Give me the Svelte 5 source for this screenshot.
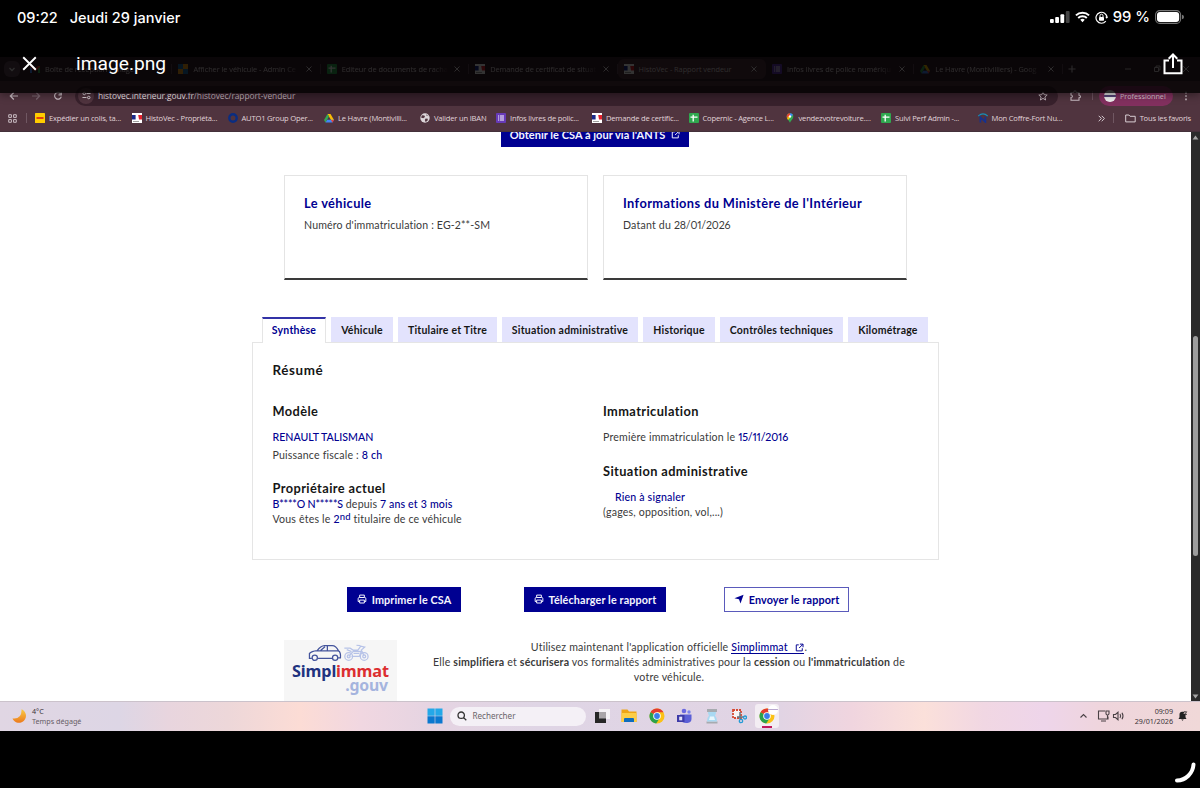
<script lang="ts">
  type Icon =
    | 'mail' | 'admin' | 'sheet' | 'flag' | 'forms' | 'drive'
    | 'dhl' | 'ring' | 'globe' | 'maps' | 'coffre';

  interface Tab {
    icon: Icon;
    title: string;
    active?: boolean;
  }

  interface Bookmark {
    icon: Icon;
    label: string;
    width: number;
  }

  const tabs: Tab[] = [
    { icon: 'mail', title: 'Boîte de réception - image' },
    { icon: 'admin', title: 'Afficher le véhicule - Admin Ce' },
    { icon: 'sheet', title: 'Editeur de documents de racha' },
    { icon: 'flag', title: 'Demande de certificat de situat' },
    { icon: 'flag', title: 'HistoVec - Rapport vendeur', active: true },
    { icon: 'forms', title: 'Infos livres de police numériqu' },
    { icon: 'drive', title: 'Le Havre (Montivilliers) - Goog' },
  ];

  const bookmarks: Bookmark[] = [
    { icon: 'dhl', label: 'Expédier un colis, ta...', width: 96.5 },
    { icon: 'flag', label: 'HistoVec - Propriéta...', width: 96 },
    { icon: 'ring', label: 'AUTO1 Group Oper...', width: 96.5 },
    { icon: 'drive', label: 'Le Havre (Montivilli...', width: 96 },
    { icon: 'globe', label: 'Valider un IBAN', width: 76 },
    { icon: 'forms', label: 'Infos livres de polic...', width: 96 },
    { icon: 'flag', label: 'Demande de certific...', width: 96.5 },
    { icon: 'sheet', label: 'Copernic - Agence L...', width: 96 },
    { icon: 'maps', label: 'vendezvotrevoiture....', width: 96.5 },
    { icon: 'sheet', label: 'Suivi Perf Admin -...', width: 96.5 },
    { icon: 'coffre', label: 'Mon Coffre-Fort Nu...', width: 100 },
  ];

  const sections = [
    { label: 'Synthèse', width: 64 },
    { label: 'Véhicule', width: 62 },
    { label: 'Titulaire et Titre', width: 99 },
    { label: 'Situation administrative', width: 136 },
    { label: 'Historique', width: 72 },
    { label: 'Contrôles techniques', width: 123 },
    { label: 'Kilométrage', width: 80 },
  ];

  let current = $state('Synthèse');
</script>

{#snippet favicon(kind: Icon)}
  <svg class="favicon" viewBox="0 0 10 10" aria-hidden="true">
    {#if kind === 'mail'}
      <path d="M0 2h2l3 2.5L8 2h2v7H8V5L5 7 2 5v4H0z" fill="#d93025" />
      <path d="M0 3l2 1.5V9H0z" fill="#4285f4" />
      <path d="M10 3L8 4.5V9h2z" fill="#34a853" />
    {:else if kind === 'admin'}
      <path d="M0 0h5v5H0zM5 5h5v5H5z" fill="#1f6fa8" />
      <path d="M5 0h5v5H5zM0 5h5v5H0z" fill="#f09a1c" />
    {:else if kind === 'sheet'}
      <rect width="10" height="10" rx="1" fill="#2fa84f" />
      <path d="M4.2 1.8v6.6M1.5 4.2h7" stroke="#fff" stroke-width="1.3" />
    {:else if kind === 'flag'}
      <rect width="10" height="10" fill="#fff" />
      <path d="M0 2h3.6v4.5H0z" fill="#1b2a8a" />
      <path d="M6.2 2H10v4.5H7z" fill="#e2232e" />
      <path d="M1 8.5h6" stroke="#888" stroke-width=".8" />
    {:else if kind === 'forms'}
      <rect width="10" height="10" rx="1" fill="#673ab7" />
      <path d="M3.8 3h4.2M3.8 5h4.2M3.8 7h4.2M2 3h1M2 5h1M2 7h1" stroke="#fff" stroke-width="1.1" />
    {:else if kind === 'drive'}
      <path d="M3.5 1h3L10 7H7z" fill="#fbbc04" />
      <path d="M3.5 1L0 7l1.5 2.4L5 3.6z" fill="#34a853" />
      <path d="M3.2 6.8H10L8.5 9.4h-7z" fill="#4285f4" />
      <path d="M7 7h3L8.5 9.4z" fill="#ea4335" />
    {:else if kind === 'dhl'}
      <rect width="10" height="10" rx=".6" fill="#fc0" />
      <path d="M1.5 5h7" stroke="#d40511" stroke-width="1.4" />
    {:else if kind === 'ring'}
      <circle cx="5" cy="5" r="3.7" fill="none" stroke="#0a2d82" stroke-width="2.4" />
    {:else if kind === 'globe'}
      <circle cx="5" cy="5" r="4.7" fill="#dcd5d9" />
      <path d="M2 2.2l2.4.3.6 1.6-1.8 1.1L1 4.6M5.6 5.4l2.3.3-.4 2-1.9 1.2-.8-1.8zM6 1.2l.4 1.4 2 .6" fill="#50343f" />
    {:else if kind === 'maps'}
      <path d="M5 10C4.6 7.6 1.7 6.5 1.7 3.5A3.3 3.3 0 0 1 8.3 3.5C8.3 6.5 5.4 7.6 5 10z" fill="#34a853" />
      <path d="M1.9 4.8A3.3 3.3 0 0 1 5 .2v3.2z" fill="#ea4335" />
      <path d="M5 .2a3.3 3.3 0 0 1 3 1.8L5 4z" fill="#4285f4" />
      <path d="M2 5l2-2 1 2-2 2z" fill="#fbbc04" />
      <circle cx="5" cy="3.5" r="1.2" fill="#fff" />
    {:else}
      <path d="M.3 3Q5-1.3 9.7 3" fill="none" stroke="#1690b8" stroke-width="1.2" />
      <path d="M2.4 9.5V4.2l5 4.8V3.8" fill="none" stroke="#15318f" stroke-width="1.7" />
    {/if}
  </svg>
{/snippet}

{#snippet external()}
  <svg class="external" viewBox="0 0 12 12" aria-hidden="true">
    <path d="M5 2.5H1.7v8h8V7M6.5 1.5h4.2v4.2M10.5 1.7L5.5 6.7" fill="none" stroke="currentColor" stroke-width="1.3" />
  </svg>
{/snippet}

{#snippet printer()}
  <svg class="btn-icon" viewBox="0 0 12 12" aria-hidden="true">
    <path d="M3.2 4V1.3h5.6V4M3.2 9H1.4V5.5q0-1.3 1.3-1.3h6.6q1.3 0 1.3 1.3V9H8.8M3.2 7.3h5.6v3.5H3.2z" fill="none" stroke="currentColor" stroke-width="1.2" />
  </svg>
{/snippet}

{#snippet chrome()}
  <svg class="app" viewBox="0 0 16 16" aria-hidden="true">
    <circle cx="8" cy="8" r="7.5" fill="#fbc116" />
    <path d="M8 8L1.5 4.2A7.5 7.5 0 0 1 14.5 4.3H8z" fill="#e33b2e" />
    <path d="M8 8L1.5 4.2A7.5 7.5 0 0 0 7.2 15.5L11 9.7z" fill="#2ba24c" />
    <circle cx="8" cy="8" r="3.8" fill="#fff" />
    <circle cx="8" cy="8" r="2.9" fill="#3b7de9" />
  </svg>
{/snippet}

<div class="screen">
  <header class="viewer">
    <div class="status">
      <span>09:22</span>
      <span class="date">Jeudi 29 janvier</span>
      <svg class="signal" viewBox="0 0 20 12" aria-hidden="true">
        <rect x="0" y="8" width="3.8" height="4" rx="1" fill="#fff" />
        <rect x="5.2" y="6" width="3.8" height="6" rx="1" fill="#fff" />
        <rect x="10.4" y="3.2" width="3.8" height="8.8" rx="1" fill="#fff" />
        <rect x="15.8" y="0" width="3.8" height="12" rx="1" fill="#444" />
      </svg>
      <svg class="wifi" viewBox="0 0 16 12" aria-hidden="true">
        <path d="M1 4.3a10 10 0 0 1 14 0M3.4 7a6.6 6.6 0 0 1 9.2 0" fill="none" stroke="#fff" stroke-width="2.1" />
        <path d="M8 11.5L5.6 9a3.4 3.4 0 0 1 4.8 0z" fill="#fff" />
      </svg>
      <svg class="lock" viewBox="0 0 13 13" aria-hidden="true">
        <path d="M10.8 10.2A5.5 5.5 0 1 1 12 6.5" fill="none" stroke="#fff" stroke-width="1.2" />
        <path d="M10.2 5.8h3l-1.5 2z" fill="#fff" />
        <rect x="4" y="5.9" width="5" height="3.8" rx=".7" fill="#fff" />
        <path d="M5 6V4.7a1.5 1.5 0 0 1 3 0V6" fill="none" stroke="#fff" stroke-width="1" />
      </svg>
      <span class="percent">99 %</span>
      <svg class="battery" viewBox="0 0 29 14" aria-hidden="true">
        <rect x=".6" y=".6" width="25" height="12.8" rx="4.2" fill="none" stroke="#777" stroke-width="1.1" />
        <rect x="2" y="2" width="22.2" height="10" rx="3" fill="#fff" />
        <path d="M27 4.7q2 .5 2 2.3t-2 2.3z" fill="#777" />
      </svg>
    </div>
    <div class="titlebar">
      <svg class="close" viewBox="0 0 16 16" aria-hidden="true">
        <path d="M1.3 1.3l13.4 13.4M14.7 1.3L1.3 14.7" stroke="#fff" stroke-width="2" />
      </svg>
      <h1>image.png</h1>
      <svg class="share" viewBox="0 0 20 22" aria-hidden="true">
        <path d="M6 7.5H1.5v12.7h17V7.5H14M10 15V1.8M5.7 5.8L10 1.5l4.3 4.3" fill="none" stroke="#fff" stroke-width="2" />
      </svg>
    </div>
  </header>

  <div class="browser">
    <div class="tabstrip">
      <svg class="tab-search" viewBox="0 0 16 16" aria-hidden="true">
        <rect width="16" height="16" rx="6" fill="#5d4350" />
        <path d="M5.5 7L8 9.5 10.5 7" fill="none" stroke="#ddd" stroke-width="1.3" />
      </svg>
      {#each tabs as tab}
        <div class="tab" class:tab--active={tab.active}>
          {@render favicon(tab.icon)}
          <span class="tab-title">{tab.title}</span>
          <svg class="tab-close" viewBox="0 0 6 6" aria-hidden="true">
            <path d="M.5.5l5 5M5.5.5l-5 5" stroke="#e0d6db" stroke-width="1" />
          </svg>
        </div>
      {/each}
      <svg class="new-tab" viewBox="0 0 8 8" aria-hidden="true"><path d="M4 .5v7M.5 4h7" stroke="#d8ced3" stroke-width="1.1" /></svg>
      <svg class="window-buttons" viewBox="0 0 66 8" aria-hidden="true">
        <path d="M1 4h6M30.5 2.5h4v4h-4zM32 2.5V1h4v4h-1.5M59 1l6 6M65 1l-6 6" fill="none" stroke="#d8ced3" stroke-width=".9" />
      </svg>
    </div>

    <div class="toolbar">
      <svg class="nav" viewBox="0 0 54 10" aria-hidden="true">
        <path d="M9 5H1.5M4.8 1.5L1.3 5l3.5 3.5" fill="none" stroke="#c9bcc3" stroke-width="1.2" />
        <path d="M23 5h7.5M27.2 1.5L30.7 5l-3.5 3.5" fill="none" stroke="#7d6872" stroke-width="1.2" />
        <path d="M51.5 2.5A3.4 3.4 0 1 0 52.3 5.6M52.3 1v2.8h-2.8" fill="none" stroke="#c9bcc3" stroke-width="1.2" />
      </svg>
      <div class="omnibox">
        <span class="site-info">
          <svg viewBox="0 0 10 10" aria-hidden="true">
            <path d="M5 2.8h4.5M.5 7.2H5" stroke="#d8ced3" stroke-width="1.2" />
            <circle cx="2.5" cy="2.8" r="1.4" fill="none" stroke="#d8ced3" stroke-width="1.1" />
            <circle cx="7.5" cy="7.2" r="1.4" fill="none" stroke="#d8ced3" stroke-width="1.1" />
          </svg>
        </span>
        <span class="url">histovec.interieur.gouv.fr<i>/histovec/rapport-vendeur</i></span>
        <svg class="star" viewBox="0 0 10 10" aria-hidden="true">
          <path d="M5 .9l1.2 2.8 3 .3-2.3 2 .7 3L5 7.4 2.4 9l.7-3L.8 4l3-.3z" fill="none" stroke="#c9bcc3" stroke-width=".9" />
        </svg>
      </div>
      <svg class="puzzle" viewBox="0 0 11 11" aria-hidden="true">
        <path d="M1 2.5h2.7Q4 .8 5 .8t1.3 1.7H9v2.7q1.5.2 1.5 1.3T9 7.8v2.4H1V7.5q1.5-.2 1.5-1.2T1 5z" fill="none" stroke="#c9bcc3" stroke-width="1.1" />
      </svg>
      <span class="toolbar-sep"></span>
      <div class="profile">
        <span class="avatar"></span>
        <span>Professionnel</span>
      </div>
      <svg class="kebab" viewBox="0 0 4 10" aria-hidden="true">
        <path d="M1.2.8h1.6v1.6H1.2zM1.2 4.2h1.6v1.6H1.2zM1.2 7.6h1.6v1.6H1.2z" fill="#c9bcc3" />
      </svg>
    </div>

    <nav class="bookmarks">
      <svg class="grid-icon" viewBox="0 0 10 10" aria-hidden="true">
        <path d="M.8.8h3v3h-3zM6.2.8h3v3h-3zM.8 6.2h3v3h-3zM6.2 6.2h3v3h-3z" fill="none" stroke="#c9bcc3" stroke-width="1.1" />
      </svg>
      <span class="bookmark-sep"></span>
      {#each bookmarks as item}
        <span class="bookmark" style:width="{item.width}px">
          {@render favicon(item.icon)}
          {item.label}
        </span>
      {/each}
      <svg class="more" viewBox="0 0 7 7" aria-hidden="true">
        <path d="M.7.8l2.7 2.7L.7 6.2M3.7.8l2.7 2.7-2.7 2.7" fill="none" stroke="#d8ced3" stroke-width="1" />
      </svg>
      <span class="bookmark-sep bookmark-sep--end"></span>
      <svg class="folder" viewBox="0 0 11 9" aria-hidden="true">
        <path d="M.7 7.9V1h3.2l1.2 1.3h5.1v5.6z" fill="none" stroke="#d8ced3" stroke-width="1" />
      </svg>
      <span class="all">Tous les favoris</span>
    </nav>

    <div class="viewport">
      <main class="page">
        <div class="csa">
          <a class="btn btn--top" href="#csa">Obtenir le CSA à jour via l'ANTS {@render external()}</a>
        </div>

        <div class="cards">
          <article class="card">
            <h2>Le véhicule</h2>
            <p class="plate">Numéro d'immatriculation : EG-2**-SM</p>
          </article>
          <article class="card">
            <h2>Informations du Ministère de l'Intérieur</h2>
            <p>Datant du <span class="day">28/01/2026</span></p>
          </article>
        </div>

        <div class="tabs" role="tablist">
          {#each sections as section}
            <button
              class="section-tab"
              class:section-tab--current={current === section.label}
              role="tab"
              aria-selected={current === section.label}
              style:width="{section.width}px"
              onclick={() => (current = section.label)}
            >{section.label}</button>
          {/each}
        </div>

        <section class="panel">
          <h3>Résumé</h3>
          <div class="columns">
            <div>
              <h4>Modèle</h4>
              <p class="model"><b class="brand">RENAULT TALISMAN</b></p>
              <p class="power">Puissance fiscale : <b>8 ch</b></p>
              <h4 class="owner">Propriétaire actuel</h4>
              <p><b class="masked">B****O N*****S</b> depuis <b>7 ans et 3 mois</b></p>
              <p>Vous êtes le <b>2<sup>nd</sup></b> titulaire de ce véhicule</p>
            </div>
            <div>
              <h4>Immatriculation</h4>
              <p class="model">Première immatriculation le <b class="day">15/11/2016</b></p>
              <h4 class="admin">Situation administrative</h4>
              <p class="nothing"><b>Rien à signaler</b></p>
              <p>(gages, opposition, vol,...)</p>
            </div>
          </div>
        </section>

        <div class="actions">
          <button class="btn btn--print">{@render printer()}Imprimer le CSA</button>
          <button class="btn btn--download">{@render printer()}Télécharger le rapport</button>
          <button class="btn btn--outline">
            <svg class="btn-icon" viewBox="0 0 12 12" aria-hidden="true">
              <path d="M11.5.8L7.8 11.5 6 6.3.5 5z" fill="currentColor" />
            </svg>Envoyer le rapport
          </button>
        </div>

        <div class="promo">
          <div class="logo">
            <svg viewBox="0 0 64 18" aria-hidden="true">
              <g fill="none" stroke="#44549c" stroke-width="1.3">
                <path d="M4 14.5H1.5V9.5q2-2.5 8-3Q13 1.5 17 1.3h8q4 0 6.5 5.5 2.5 1.5 2 7.2H31M10 14.5h15M9 6.8h22M20 1.5v5.3M13 6.5l4.5-4" />
                <circle cx="7" cy="14" r="2.7" />
                <circle cx="28" cy="14" r="2.7" />
              </g>
              <g fill="none" stroke="#b7c3e8" stroke-width="1.3">
                <circle cx="42" cy="12.5" r="4" />
                <circle cx="42" cy="12.5" r="1.5" />
                <circle cx="58" cy="12.5" r="4" />
                <circle cx="58" cy="12.5" r="1.5" />
                <path d="M37.5 4h6l3 2h5l3-4 4 1-3.5 3 3 6M45 12.5h8l2-5-8-.5-5 5.5M50 1l4 .5M47 9.5h6M40 5.5l5 2" />
              </g>
            </svg>
            <div class="wordmark">Simpl<em>immat</em></div>
            <div class="gouv">.gouv</div>
          </div>
          <p>
            Utilisez maintenant l'application officielle <a href="#simplimmat">Simplimmat &nbsp;{@render external()}</a>.<br />
            Elle <strong>simplifiera</strong> et <strong>sécurisera</strong> vos formalités administratives pour la
            <strong>cession</strong> ou <strong>l'immatriculation</strong> de<br />
            votre véhicule.
          </p>
        </div>
      </main>
      <div class="scrollbar">
        <svg viewBox="0 0 8 6" aria-hidden="true"><path d="M4 .5L7.5 5.5h-7z" fill="#a5a5a5" /></svg>
        <span class="thumb"></span>
        <svg viewBox="0 0 8 6" aria-hidden="true"><path d="M4 5.5L.5.5h7z" fill="#a5a5a5" /></svg>
      </div>
    </div>
  </div>

  <footer class="taskbar">
    <svg class="moon" viewBox="0 0 14 14" aria-hidden="true">
      <defs>
        <linearGradient id="moon" x2="0" y2="1"><stop stop-color="#f9cb45" /><stop offset="1" stop-color="#ec7a1c" /></linearGradient>
      </defs>
      <path d="M9.5.3A7 7 0 1 1 .5 9.5Q10 10.5 9.5.3z" fill="url(#moon)" />
    </svg>
    <div class="weather"><span>4°C</span><small>Temps dégagé</small></div>
    <div class="apps">
      <svg class="app" viewBox="0 0 16 16" aria-hidden="true">
        <path d="M.5.5h7.2v7.2H.5zM8.3.5h7.2v7.2H8.3z" fill="#24a8e8" />
        <path d="M.5 8.3h7.2v7.2H.5zM8.3 8.3h7.2v7.2H8.3z" fill="#0a78cf" />
      </svg>
      <div class="search">
        <svg viewBox="0 0 10 10" aria-hidden="true"><path d="M9.3 9.3L6.6 6.6M1 4.2a3.2 3.2 0 1 0 6.4 0 3.2 3.2 0 1 0-6.4 0z" fill="none" stroke="#333" stroke-width="1.3" /></svg>
        Rechercher
      </div>
      <svg class="app" viewBox="0 0 16 16" aria-hidden="true">
        <path d="M5 1h11v10H5z" fill="#f5f3f5" /><path d="M1 4h11v11H1z" fill="#262626" /><path d="M5 4h7v6.5H5z" fill="#a9a6a8" />
      </svg>
      <svg class="app" viewBox="0 0 16 16" aria-hidden="true">
        <path d="M.5 1.5h6l1.5 2h7.5v10.5H.5z" fill="#eda517" /><path d="M.5 5h15v9H.5z" fill="#fccd47" /><path d="M3 14v-3q0-1 1-1h8q1 0 1 1v3z" fill="#0f6cbd" />
      </svg>
      {@render chrome()}
      <svg class="app" viewBox="0 0 16 16" aria-hidden="true">
        <circle cx="8" cy="3" r="2.3" fill="#6b69e0" /><circle cx="13" cy="4" r="1.7" fill="#7b83eb" />
        <path d="M4 6.5h11.5V11q0 3.5-4 4-6 .5-7.5-4z" fill="#5b5fd6" /><path d="M1 7h7.5v7H1z" fill="#3d3aa8" /><path d="M3.2 8.7h3v3.6h-3z" fill="#e4e3fa" />
      </svg>
      <svg class="app" viewBox="0 0 16 16" aria-hidden="true">
        <path d="M3 1h10v3H3zM2.5 13.5h11v2h-11z" fill="#a7abb0" /><path d="M4 4h8q0 2.5-1 3.5 2 2 2 6H3q0-4 2-6-1-1-1-3.5z" fill="#a9d9f2" /><path d="M6 8.5h4l1 3.5H5z" fill="#e8f7fd" />
      </svg>
      <svg class="app" viewBox="0 0 16 16" aria-hidden="true">
        <path d="M2 2h8v8H2z" fill="#f7f4f4" stroke="#d64a32" stroke-width="1.8" stroke-dasharray="2 1" />
        <path d="M9 4v7M6 9h7" stroke="#667581" stroke-width="1.5" />
        <circle cx="10" cy="13" r="1.7" fill="none" stroke="#249bd6" stroke-width="1.3" /><circle cx="14" cy="9.5" r="1.5" fill="none" stroke="#249bd6" stroke-width="1.3" />
      </svg>
      <span class="running">{@render chrome()}<span class="badge"></span></span>
    </div>
    <svg class="tray" viewBox="0 0 48 14" aria-hidden="true">
      <g fill="none" stroke="#4a4145" stroke-width="1.1">
        <path d="M1.5 8.5L4.5 5.5l3 3" />
        <path d="M26 2h-6.500v8H29V7.500M22 12h5M27 2h3v2.500q0 1.500-1.500 1.500T27 4.500zM28.500 6v4" />
        <path d="M34.500 5.500h2L39 3.300v7.400L36.500 8.500h-2zM41 5q1.300 2 0 4M43 3.800q2 3.200 0 6.400" />
      </g>
    </svg>
    <div class="clock"><span>09:09</span><span>29/01/2026</span></div>
    <svg class="bell" viewBox="0 0 10 10" aria-hidden="true">
      <path d="M1 8l1-1.800V3.500A2.800 2.800 0 0 1 5 .8h2L6 3h2v3.300L9 8zM3.700 8.500h2.600L5 9.700z" fill="#222" /><path d="M6.500.8h2.700L7 3.300h2.500" fill="none" stroke="#222" stroke-width=".8" />
    </svg>
  </footer>

  <svg class="spinner" viewBox="0 0 24 24" aria-label="Chargement">
    <path d="M20.500 4.500A17 17 0 0 1 4 20.500" fill="none" stroke="#fff" stroke-width="4" stroke-linecap="round" />
  </svg>
</div>

<style>
  :global(body) {
    background: #000;
  }

  .screen {
    position: relative;
    display: flex;
    flex-direction: column;
    box-sizing: border-box;
    width: 1200px;
    height: 788px;
    padding-top: 57px;
    overflow: hidden;
    background: #000;
    font-family: "Open Sans", "Noto Sans", sans-serif;
  }

  svg {
    display: block;
    flex-shrink: 0;
  }

  h1, h2, h3, h4, p {
    margin: 0;
  }

  /* translucent bar of the image viewer, laid over the picture */
  .viewer {
    position: absolute;
    z-index: 2;
    inset: 0 0 auto;
    height: 93px;
    background: rgba(0, 0, 0, 0.8);
    color: #fff;
    box-shadow: 0 2px 8px rgba(0, 0, 0, 0.4);
  }

  .status {
    display: flex;
    align-items: center;
    height: 34px;
    padding: 0 16px 0 17px;
    font: 500 14.5px Inter, sans-serif;
  }

  .date {
    margin-left: 12px;
  }

  .signal {
    width: 20px;
    height: 12px;
    margin-left: auto;
  }

  .wifi {
    width: 15px;
    height: 12px;
    margin-left: 5px;
  }

  .lock {
    width: 13px;
    height: 13px;
    margin: 0 5px;
  }

  .percent {
    font-size: 14.8px;
  }

  .battery {
    width: 29px;
    height: 14px;
    margin-left: 5px;
  }

  .titlebar {
    display: flex;
    align-items: center;
    height: 59px;
    padding: 0 17px 0 22px;
  }

  .close {
    width: 15px;
    height: 15px;
  }

  h1 {
    flex: 1;
    margin-left: 39px;
    font: 400 19.2px Roboto, sans-serif;
  }

  .share {
    width: 20px;
    height: 22px;
  }

  .tabstrip {
    display: flex;
    align-items: center;
    height: 24px;
    padding: 0 10px 0 4px;
    background: #36202b;
    color: #e0d6db;
    font-size: 7.35px;
    letter-spacing: -0.04px;
  }

  .tab-search {
    width: 16px;
    height: 16px;
    margin-right: 4px;
  }

  .tab {
    display: flex;
    align-items: center;
    box-sizing: border-box;
    width: 148.4px;
    height: 20px;
    padding: 0 9px 0 6px;
    background: linear-gradient(#5d4350, #5d4350) right center / 1px 10px no-repeat;
  }

  .tab--active {
    border-radius: 6px;
    background: #50343f;
  }

  .favicon {
    width: 10px;
    height: 10px;
  }

  .tab-title {
    flex: 1;
    margin: 0 6px 0 5px;
    white-space: nowrap;
    mask-image: linear-gradient(90deg, #000 85%, transparent);
  }

  .tab--active .tab-title {
    mask-image: none;
  }

  .tab-close {
    width: 6px;
    height: 6px;
  }

  .new-tab {
    width: 8px;
    height: 8px;
    margin-left: 5px;
  }

  .window-buttons {
    width: 66px;
    height: 8px;
    margin-left: auto;
  }

  .toolbar {
    display: flex;
    align-items: center;
    height: 26px;
    padding: 3px 12px 0 9px;
    box-sizing: border-box;
    background: #50343f;
  }

  .nav {
    width: 54px;
    height: 10px;
  }

  .omnibox {
    display: flex;
    align-items: center;
    box-sizing: border-box;
    width: 983px;
    height: 20px;
    margin-left: 12px;
    padding: 0 10px 0 3px;
    border-radius: 10px;
    background: #38212c;
  }

  .site-info {
    display: grid;
    place-items: center;
    width: 16px;
    height: 16px;
    border-radius: 50%;
    background: #50343f;
  }

  .site-info svg {
    width: 9px;
    height: 9px;
  }

  .url {
    flex: 1;
    margin-left: 4px;
    color: #eee6ea;
    font-size: 8.4px;
    letter-spacing: -0.07px;
  }

  .url i {
    color: #bfb0b8;
    font-style: normal;
  }

  .star {
    width: 10px;
    height: 10px;
  }

  .puzzle {
    width: 11px;
    height: 11px;
    margin-left: 12px;
  }

  .toolbar-sep {
    width: 1px;
    height: 9px;
    margin: 0 6px 0 11px;
    background: #6e5460;
  }

  .profile {
    display: flex;
    align-items: center;
    box-sizing: border-box;
    width: 74px;
    height: 20px;
    padding-left: 5px;
    gap: 4px;
    border-radius: 10px;
    background: #82305f;
    color: #d9c3cf;
    font-size: 7.2px;
  }

  .avatar {
    width: 12px;
    height: 12px;
    border-radius: 50%;
    background: linear-gradient(#ddd 45%, #547 45% 56%, #eee 56%);
  }

  .kebab {
    width: 4px;
    height: 10px;
    margin-left: auto;
  }

  .bookmarks {
    display: flex;
    align-items: center;
    box-sizing: border-box;
    height: 25px;
    padding: 0 9px 2px 8px;
    border-bottom: 1px solid #44303a;
    background: #50343f;
    color: #e0d5da;
    font-size: 7.6px;
    letter-spacing: -0.2px;
    white-space: nowrap;
  }

  .grid-icon {
    width: 9px;
    height: 9px;
  }

  .bookmark-sep {
    width: 1px;
    height: 10px;
    margin: 0 8.5px;
    background: #705762;
  }

  .bookmark-sep--end {
    margin-left: auto;
  }

  .bookmark {
    display: flex;
    align-items: center;
    flex-shrink: 0;
    gap: 4px;
  }

  .more {
    width: 7px;
    height: 7px;
    margin-left: 20px;
  }

  .folder {
    width: 11px;
    height: 9px;
    margin: 0 4px 0 2px;
  }

  .viewport {
    display: flex;
    height: 569px;
    overflow: hidden;
    background: #fff;
  }

  .page {
    flex: 1;
    color: #3a3a3a;
    font: 400 10.6px/15px Lato, "Noto Sans", sans-serif;
    font-variant-ligatures: none;
    font-variant-numeric: proportional-nums;
    letter-spacing: 0.18px;
  }

  .csa {
    display: flex;
    justify-content: center;
    margin: -10px 1px 0 0;
  }

  .btn {
    display: flex;
    align-items: center;
    justify-content: center;
    box-sizing: border-box;
    height: 25px;
    padding: 0 0 1px;
    border: 1px solid #000091;
    background: #000091;
    color: #f5f5fe;
    font: 700 10.8px Lato, sans-serif;
    font-variant-ligatures: none;
    letter-spacing: 0.13px;
    text-decoration: none;
  }

  .btn--top {
    width: 188px;
    padding: 0;
    font-size: 11px;
    letter-spacing: 0.03px;
  }

  .external {
    display: inline-block;
    width: 9px;
    height: 9px;
    vertical-align: -1px;
  }

  .btn--top .external {
    margin-left: 6px;
  }

  .cards {
    display: flex;
    gap: 15px;
    width: 623px;
    margin: 28px auto 0;
  }

  .card {
    flex: 1;
    box-sizing: border-box;
    height: 105px;
    padding: 19px;
    border: 1px solid #e4e4e4;
    border-bottom: 2px solid #3a3a3a;
  }

  h2 {
    margin-bottom: 7px;
    color: #000091;
    font-size: 12.8px;
    line-height: 16px;
    letter-spacing: 0.4px;
  }

  .plate {
    letter-spacing: 0.14px;
  }

  .tabs {
    display: flex;
    gap: 5px;
    width: 687px;
    margin: 37px auto 0;
    padding-left: 10px;
    box-sizing: border-box;
  }

  .section-tab {
    box-sizing: border-box;
    flex-shrink: 0;
    height: 25px;
    padding: 0;
    border: 0;
    background: #e3e3fd;
    color: #161616;
    font: 700 10.5px Lato, sans-serif;
    font-variant-ligatures: none;
    letter-spacing: 0.22px;
    white-space: nowrap;
  }

  .section-tab--current {
    position: relative;
    height: 26px;
    margin-bottom: -1px;
    padding-bottom: 2px;
    border: 1px solid #e5e5e5;
    border-top: 2px solid #3333a7;
    border-bottom: 0;
    background: #fff;
    color: #000091;
  }

  .panel {
    box-sizing: border-box;
    width: 687px;
    height: 218px;
    margin: 0 auto;
    padding: 18px 19px 18px 19.5px;
    border: 1px solid #e5e5e5;
  }

  h3 {
    color: #161616;
    font-size: 13.4px;
    line-height: 19px;
    letter-spacing: 0.6px;
  }

  .columns {
    display: grid;
    grid-template-columns: 330.5px 1fr;
    margin-top: 22px;
  }

  h4 {
    color: #161616;
    font-size: 12.8px;
    line-height: 18px;
    letter-spacing: 0.4px;
  }

  b {
    color: #000091;
    font-weight: 500;
  }

  .brand {
    letter-spacing: 0;
  }

  .masked,
  .day {
    letter-spacing: -0.15px;
  }

  .model {
    margin-top: 10px;
  }

  .power {
    margin-top: 3px;
  }

  .owner {
    margin-top: 17px;
    line-height: 17px;
  }

  sup {
    font-size: 9.5px;
    line-height: 0;
    vertical-align: 3px;
  }

  .admin {
    margin-top: 17px;
  }

  .nothing {
    margin-top: 10px;
    padding-left: 12px;
  }

  .actions {
    display: flex;
    width: 502px;
    margin: 27px 0 0 347px;
  }

  .btn-icon {
    width: 10px;
    height: 10px;
    margin-right: 5px;
  }

  .btn--print {
    width: 114px;
  }

  .btn--download {
    width: 142px;
    margin-left: 63px;
  }

  .btn--outline {
    width: 125px;
    margin-left: auto;
    border-color: #5a5abb;
    background: #fff;
    color: #000091;
  }

  .promo {
    display: flex;
    gap: 34px;
    width: 623px;
    margin: 28px auto 0;
  }

  .promo p {
    flex: 1;
    text-align: center;
    white-space: nowrap;
  }

  .promo a {
    border-bottom: 1px solid #000091;
    color: #000091;
    font-weight: 500;
    text-decoration: none;
  }

  .promo .external {
    margin-left: 2px;
  }

  .logo {
    box-sizing: border-box;
    width: 113px;
    height: 70px;
    padding: 4px 9px 0 8px;
    background: #f6f6f6;
    font: 700 16.3px/18px "Noto Sans", sans-serif;
    letter-spacing: -0.15px;
  }

  .logo svg {
    width: 62px;
    height: 18px;
    margin-left: 16px;
  }

  .wordmark {
    color: #21337f;
  }

  .wordmark em {
    color: #dc2e30;
    font-style: normal;
  }

  .gouv {
    margin-top: -4px;
    color: #a5b4de;
    font-size: 15.8px;
    text-align: right;
  }

  .scrollbar {
    display: flex;
    flex-direction: column;
    align-items: center;
    box-sizing: border-box;
    width: 9px;
    padding: 3px 0 2px;
    background: #2b2b2b;
  }

  .scrollbar svg {
    width: 7px;
    height: 5px;
  }

  .thumb {
    width: 5px;
    height: 220px;
    margin: 196px 0 auto;
    border-radius: 3px;
    background: #9d9d9d;
  }

  .taskbar {
    display: flex;
    align-items: center;
    box-sizing: border-box;
    height: 30px;
    padding: 0 12px 1px;
    border-top: 1px solid #cbc2cb;
    background: linear-gradient(90deg, #e0d6e3, #ddd6e5 10%, #e8d5de 14%, #edd7d9 19%, #fcdcd5 25%, #f1d7e1 30%, #e5d4e2 36%, #dfd5e5 45%, #e1d4e4 65%, #f0d5df 71%, #fbe0da 77%, #f1d7e3 82%, #eed5ea 87%, #efd5dc 92%, #f0d8d8);
    color: #3b3438;
    font: 7.2px/10px "Noto Sans", sans-serif;
  }

  .moon {
    width: 14px;
    height: 14px;
  }

  .weather {
    display: flex;
    flex-direction: column;
    width: 100px;
    margin: -1px 0 0 6px;
  }

  .weather small {
    color: #675d64;
    font-size: 7.2px;
  }

  .apps {
    display: flex;
    align-items: center;
    margin-left: 294.5px;
  }

  .app {
    width: 16px;
    height: 16px;
    margin-right: 11.5px;
  }

  .search {
    display: flex;
    align-items: center;
    box-sizing: border-box;
    width: 136px;
    height: 19px;
    margin: 0 8px 0 -4.5px;
    padding-left: 7px;
    gap: 6px;
    border-radius: 10px;
    background: #f4f0f6;
    color: #6b646a;
    font-size: 8.1px;
  }

  .search svg {
    width: 10px;
    height: 10px;
  }

  .running {
    position: relative;
    display: grid;
    place-items: center;
    width: 24px;
    height: 24px;
    margin-left: -4px;
    border-radius: 3px;
    background: linear-gradient(#c2185b, #c2185b) center bottom / 10px 2px no-repeat, #f3edf3;
  }

  .running .app {
    margin: 0;
  }

  .badge {
    position: absolute;
    top: 1px;
    right: 1px;
    width: 10px;
    height: 10px;
    border-radius: 50%;
    background: linear-gradient(#fff 40%, #b9a8cf 40% 50%, #fff 50%);
  }

  .tray {
    width: 48px;
    height: 14px;
    margin-left: auto;
  }

  .clock {
    display: flex;
    flex-direction: column;
    align-items: flex-end;
    margin: -1px 4px 0 8px;
  }

  .bell {
    width: 11px;
    height: 10px;
  }

  .spinner {
    position: absolute;
    top: 760px;
    left: 1173px;
    width: 24px;
    height: 24px;
  }
</style>
